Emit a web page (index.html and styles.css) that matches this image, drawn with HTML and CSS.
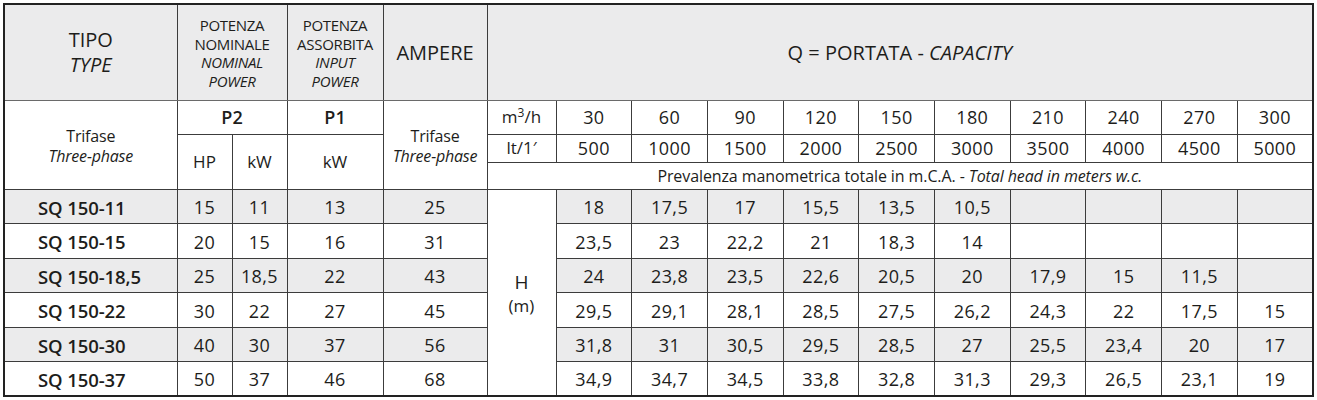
FILE: index.html
```html
<!DOCTYPE html>
<html lang="it">
<head>
<meta charset="utf-8">
<title>SQ 150</title>
<link rel="stylesheet" href="styles.css">
</head>
<body>
<div class="wrap">
<table class="pump">
  <colgroup>
    <col class="c-type"><col class="c-hp"><col class="c-kw"><col class="c-p1"><col class="c-amp"><col class="c-h">
    <col class="c-q"><col class="c-q"><col class="c-q"><col class="c-q"><col class="c-q">
    <col class="c-q"><col class="c-q"><col class="c-q"><col class="c-q"><col class="c-q">
  </colgroup>
  <thead>
    <tr class="r-head">
      <th class="big">TIPO<br><i>TYPE</i></th>
      <th colspan="2" class="small">POTENZA<br>NOMINALE<br><i>NOMINAL</i><br><i>POWER</i></th>
      <th class="small">POTENZA<br>ASSORBITA<br><i>INPUT</i><br><i>POWER</i></th>
      <th class="big amp">AMPERE</th>
      <th colspan="11" class="big cap">Q = PORTATA - <i>CAPACITY</i></th>
    </tr>
    <tr class="r-m3">
      <td rowspan="3" class="phase">Trifase<br><i>Three-phase</i></td>
      <td colspan="2" class="bold">P2</td>
      <td class="bold">P1</td>
      <td rowspan="3" class="phase">Trifase<br><i>Three-phase</i></td>
      <td class="lbl">m<sup>3</sup>/h</td>
      <td>30</td><td>60</td><td>90</td><td>120</td><td>150</td><td>180</td><td>210</td><td>240</td><td>270</td><td>300</td>
    </tr>
    <tr class="r-lt">
      <td rowspan="2" class="unit">HP</td>
      <td rowspan="2" class="unit">kW</td>
      <td rowspan="2" class="unit">kW</td>
      <td class="lbl">lt/1′</td>
      <td>500</td><td>1000</td><td>1500</td><td>2000</td><td>2500</td><td>3000</td><td>3500</td><td>4000</td><td>4500</td><td>5000</td>
    </tr>
    <tr class="r-prev">
      <td colspan="11" class="prev">Prevalenza manometrica totale in m.C.A. - <i>Total head in meters w.c.</i></td>
    </tr>
  </thead>
  <tbody>
    <tr class="grey">
      <td class="model">SQ 150-11</td><td>15</td><td>11</td><td>13</td><td>25</td>
      <td rowspan="6" class="hcell">H<br><span class="m">(m)</span></td>
      <td>18</td><td>17,5</td><td>17</td><td>15,5</td><td>13,5</td><td>10,5</td><td></td><td></td><td></td><td></td>
    </tr>
    <tr>
      <td class="model">SQ 150-15</td><td>20</td><td>15</td><td>16</td><td>31</td>
      <td>23,5</td><td>23</td><td>22,2</td><td>21</td><td>18,3</td><td>14</td><td></td><td></td><td></td><td></td>
    </tr>
    <tr class="grey">
      <td class="model">SQ 150-18,5</td><td>25</td><td>18,5</td><td>22</td><td>43</td>
      <td>24</td><td>23,8</td><td>23,5</td><td>22,6</td><td>20,5</td><td>20</td><td>17,9</td><td>15</td><td>11,5</td><td></td>
    </tr>
    <tr>
      <td class="model">SQ 150-22</td><td>30</td><td>22</td><td>27</td><td>45</td>
      <td>29,5</td><td>29,1</td><td>28,1</td><td>28,5</td><td>27,5</td><td>26,2</td><td>24,3</td><td>22</td><td>17,5</td><td>15</td>
    </tr>
    <tr class="grey">
      <td class="model">SQ 150-30</td><td>40</td><td>30</td><td>37</td><td>56</td>
      <td>31,8</td><td>31</td><td>30,5</td><td>29,5</td><td>28,5</td><td>27</td><td>25,5</td><td>23,4</td><td>20</td><td>17</td>
    </tr>
    <tr>
      <td class="model">SQ 150-37</td><td>50</td><td>37</td><td>46</td><td>68</td>
      <td>34,9</td><td>34,7</td><td>34,5</td><td>33,8</td><td>32,8</td><td>31,3</td><td>29,3</td><td>26,5</td><td>23,1</td><td>19</td>
    </tr>
  </tbody>
</table>
</div>
</body>
</html>
```
FILE: styles.css
```css
html, body {
  margin: 0;
  padding: 0;
  background: #ffffff;
}

.wrap {
  padding: 3px 0 0 3px;
}

.pump {
  width: 1311px;
  border-collapse: collapse;
  table-layout: fixed;
  border: 2px solid #222222;
  font-family: "Open Sans", "Noto Sans", "Liberation Sans", sans-serif;
  color: #1d1d1b;
  font-size: 18px;
  letter-spacing: 0.4px;
}

.c-type { width: 173px; }
.c-hp { width: 55px; }
.c-kw { width: 55px; }
.c-p1 { width: 96px; }
.c-amp { width: 104px; }
.c-h { width: 69px; }

.pump th,
.pump td {
  box-sizing: border-box;
  border: 1px solid #3c3c3c;
  text-align: center;
  vertical-align: middle;
  padding: 0;
  font-weight: normal;
  line-height: 1.25;
  white-space: nowrap;
}

.r-head th {
  background: #ebebec;
  height: 96px;
  border-bottom-color: #6a6a6a;
}

.big {
  font-size: 20px;
  line-height: 24px;
  letter-spacing: 0;
}

.small {
  font-size: 15px;
  line-height: 20.5px;
  letter-spacing: -0.3px;
  padding-top: 2px !important;
}

.r-m3 td { height: 34px; }
.r-lt td { height: 28px; }
.r-prev td { height: 27px; }

.phase {
  font-size: 16px;
  line-height: 21px;
  letter-spacing: -0.2px;
  padding-top: 2px !important;
}

.bold {
  font-weight: 600 !important;
  font-size: 18px;
  letter-spacing: 0;
}

.unit {
  font-size: 17px;
  letter-spacing: 0;
}

.lbl {
  font-size: 17px;
  letter-spacing: 0;
}

.prev {
  font-size: 16px;
  letter-spacing: -0.1px;
}

sup {
  font-size: 12px;
  line-height: 0;
  vertical-align: 6px;
}

tbody td {
  height: 34.5px;
  padding-top: 2px !important;
}

tbody tr.grey td {
  background: #ebebec;
}

tbody tr.grey td.hcell,
.hcell {
  background: #ffffff;
}

.hcell {
  font-size: 19px;
  line-height: 22px;
  letter-spacing: 0;
  padding-top: 4px !important;
}

.hcell .m {
  font-size: 17px;
}

.model {
  text-align: left !important;
  padding-left: 33px !important;
  font-weight: 600 !important;
  font-size: 18.5px;
  letter-spacing: -0.1px;
}
```
